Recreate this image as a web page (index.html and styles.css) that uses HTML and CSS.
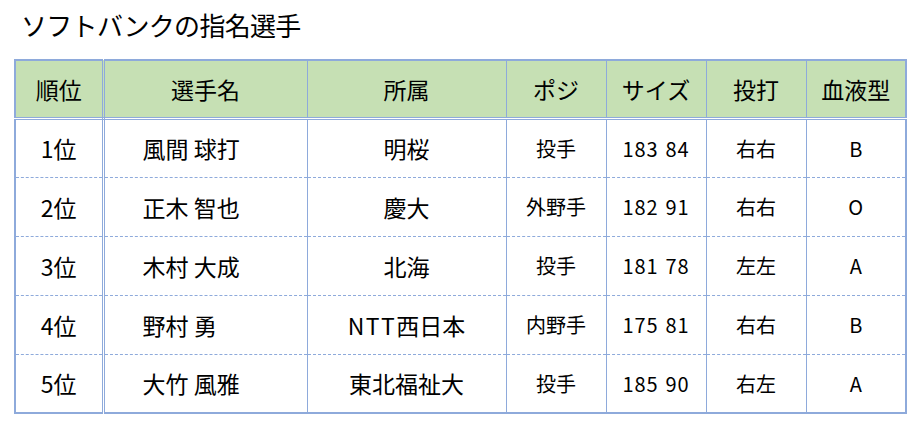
FILE: index.html
```html
<!DOCTYPE html>
<html lang="ja">
<head>
<meta charset="utf-8">
<title>ソフトバンクの指名選手</title>
<link rel="stylesheet" href="styles.css">
</head>
<body>
<h1 class="title">ソフトバンクの指名選手</h1>
<table class="draft">
  <colgroup>
    <col class="c-rank">
    <col class="c-name">
    <col class="c-team">
    <col class="c-small">
    <col class="c-small">
    <col class="c-small">
    <col class="c-small">
  </colgroup>
  <thead>
    <tr>
      <th class="rank">順位</th>
      <th>選手名</th>
      <th>所属</th>
      <th>ポジ</th>
      <th>サイズ</th>
      <th>投打</th>
      <th>血液型</th>
    </tr>
  </thead>
  <tbody>
    <tr>
      <td class="rank">1位</td><td class="name">風間 球打</td><td class="team">明桜</td>
      <td class="sm">投手</td><td class="sm num">183 84</td><td class="sm">右右</td><td class="sm">B</td>
    </tr>
    <tr>
      <td class="rank">2位</td><td class="name">正木 智也</td><td class="team">慶大</td>
      <td class="sm">外野手</td><td class="sm num">182 91</td><td class="sm">右右</td><td class="sm">O</td>
    </tr>
    <tr>
      <td class="rank">3位</td><td class="name">木村 大成</td><td class="team">北海</td>
      <td class="sm">投手</td><td class="sm num">181 78</td><td class="sm">左左</td><td class="sm">A</td>
    </tr>
    <tr>
      <td class="rank">4位</td><td class="name">野村 勇</td><td class="team"><span class="lat">NTT</span>西日本</td>
      <td class="sm">内野手</td><td class="sm num">175 81</td><td class="sm">右右</td><td class="sm">B</td>
    </tr>
    <tr>
      <td class="rank">5位</td><td class="name">大竹 風雅</td><td class="team">東北福祉大</td>
      <td class="sm">投手</td><td class="sm num">185 90</td><td class="sm">右左</td><td class="sm">A</td>
    </tr>
  </tbody>
</table>
</body>
</html>
```

FILE: styles.css
```css
html, body {
  margin: 0;
  padding: 0;
  background: #ffffff;
}

body {
  font-family: "Noto Sans CJK JP", "Noto Sans", sans-serif;
  color: #000000;
  padding: 0 0 0 14px;
}

.title {
  margin: 0;
  padding: 7px 0 0 7px;
  height: 59px;
  box-sizing: border-box;
  font-size: 26px;
  font-weight: 400;
  line-height: 36px;
  letter-spacing: -0.7px;
}

.draft {
  border-collapse: collapse;
  table-layout: fixed;
  width: 893px;
  border: 2px solid #8eaadb;
}

.c-rank { width: 88px; }
.c-name { width: 204px; }
.c-team { width: 199px; }
.c-small { width: 100px; }

.draft th,
.draft td {
  padding: 0;
  text-align: center;
  vertical-align: middle;
  font-weight: 400;
  border-left: 1px solid #8eaadb;
  border-right: 1px solid #8eaadb;
}

.draft th {
  background: #c6e0b4;
  font-size: 23px;
  height: 55.5px;
  border-bottom: 3px double #8eaadb;
}

.draft td {
  font-size: 23px;
  height: 58px;
  border-bottom: 1px dashed #8eaadb;
}

.draft tbody tr:first-child td {
  height: 57px;
}

.draft tbody tr:last-child td {
  height: 57px;
  border-bottom: 2px solid #8eaadb;
}

.draft .rank {
  border-right: 3px double #8eaadb;
}

.draft td.name {
  text-align: left;
  padding-left: 38px;
}

.draft td.sm {
  font-size: 20px;
}

.draft td.num {
  letter-spacing: 0.9px;
  word-spacing: 1.5px;
}

.lat {
  letter-spacing: 1.5px;
}
```
